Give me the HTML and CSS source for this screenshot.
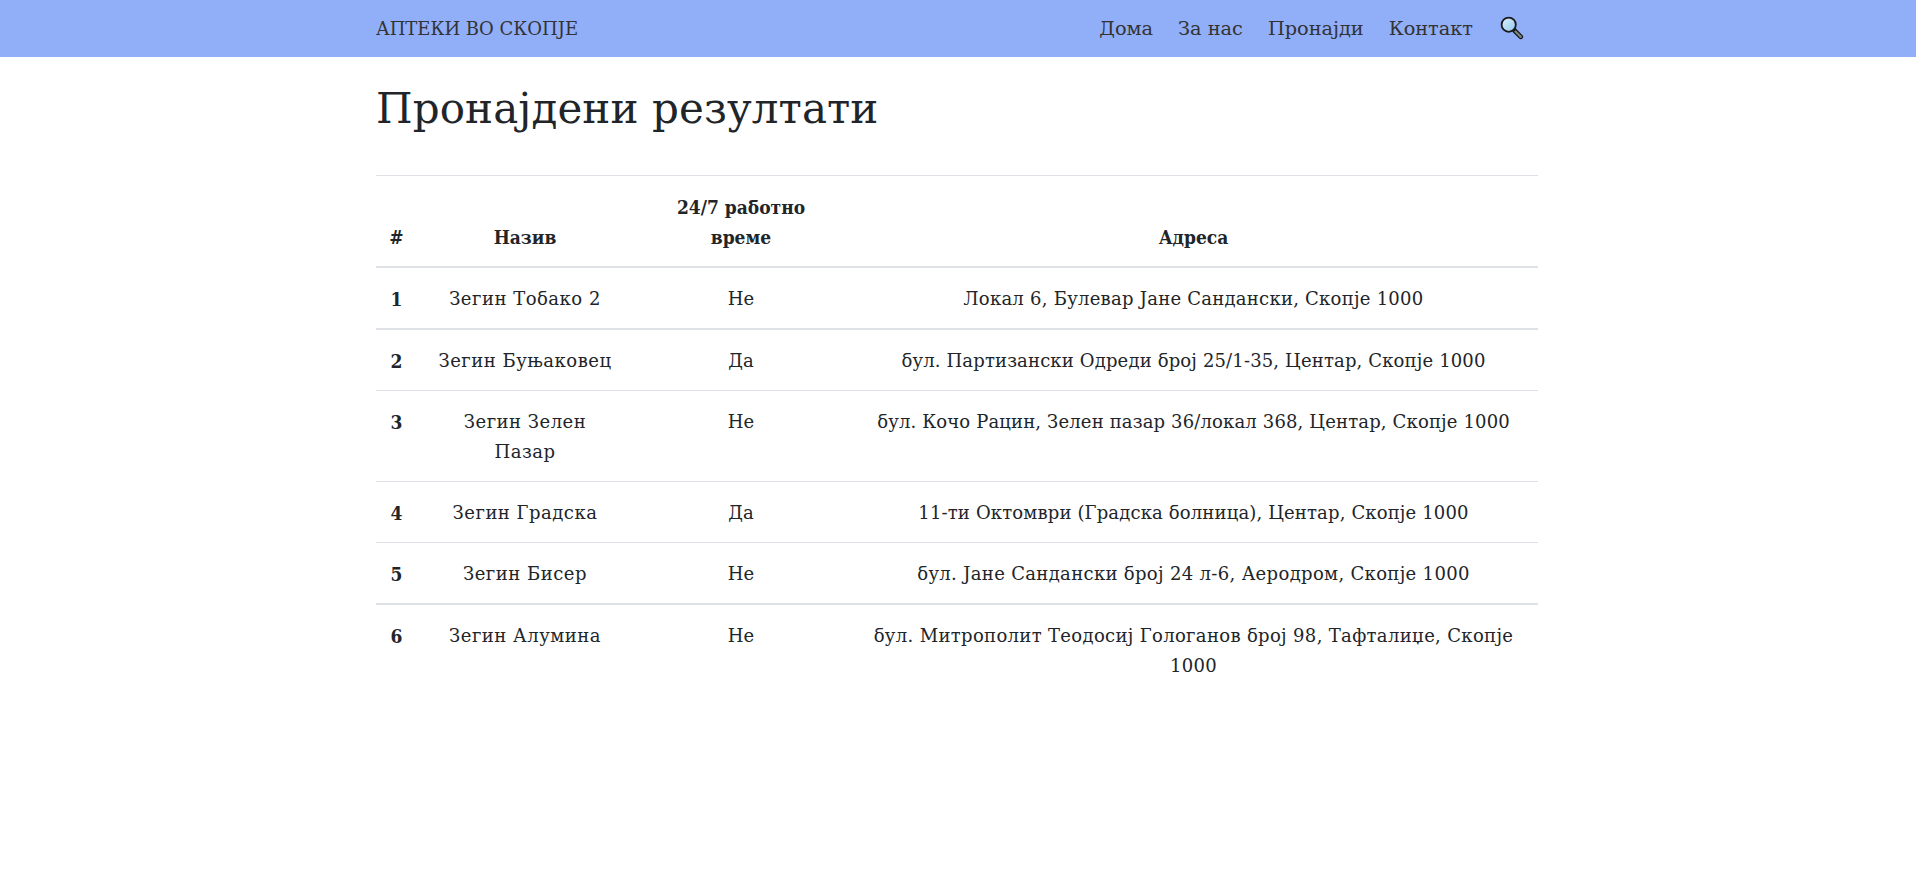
FILE: index.html
```html
<!DOCTYPE html>
<html lang="mk">
<head>
<meta charset="utf-8">
<title>Аптеки во Скопје</title>
<link rel="stylesheet" href="styles.css">
</head>
<body>
<header class="navbar">
  <div class="nav-inner">
    <a class="brand">АПТЕКИ ВО СКОПЈЕ</a>
    <nav class="nav-links">
      <a>Дома</a><a>За нас</a><a>Пронајди</a><a>Контакт</a>
      <svg class="search" width="26" height="26" viewBox="0 0 26 26">
        <defs>
          <linearGradient id="lens" x1="0" y1="0" x2="1" y2="1">
            <stop offset="0" stop-color="#dff1fc"/>
            <stop offset="1" stop-color="#8fc6ee"/>
          </linearGradient>
        </defs>
        <path d="M16.5 16.5 L22.8 22.8" stroke="#111" stroke-width="4.6" stroke-linecap="round"/>
        <path d="M17.5 17.5 L22.8 22.8" stroke="#79837e" stroke-width="2.4" stroke-linecap="round"/>
        <circle cx="10.7" cy="10.7" r="7.1" fill="url(#lens)" stroke="#1a1a1a" stroke-width="1.8"/>
      </svg>
    </nav>
  </div>
</header>
<main class="content">
  <h1 class="title">Пронајдени резултати</h1>
  <table class="results">
    <thead>
      <tr><th class="c-n">#</th><th class="c-name">Назив</th><th class="c-h">24/7 работно време</th><th>Адреса</th></tr>
    </thead>
    <tbody>
      <tr class="r-first"><th>1</th><td class="name">Зегин Тобако 2</td><td>Не</td><td class="addr-mid">Локал 6, Булевар Јане Сандански, Скопје 1000</td></tr>
      <tr class="r-thick"><th>2</th><td class="name">Зегин Буњаковец</td><td>Да</td><td>бул. Партизански Одреди број 25/1-35, Центар, Скопје 1000</td></tr>
      <tr><th>3</th><td class="name">Зегин Зелен Пазар</td><td>Не</td><td>бул. Кочо Рацин, Зелен пазар 36/локал 368, Центар, Скопје 1000</td></tr>
      <tr><th>4</th><td class="name">Зегин Градска</td><td>Да</td><td>11-ти Октомври (Градска болница), Центар, Скопје 1000</td></tr>
      <tr><th>5</th><td class="name">Зегин Бисер</td><td>Не</td><td class="addr-wide">бул. Јане Сандански број 24 л-6, Аеродром, Скопје 1000</td></tr>
      <tr class="r-thick"><th>6</th><td class="name">Зегин Алумина</td><td>Не</td><td class="addr-wide">бул. Митрополит Теодосиј Гологанов број 98, Тафталиџе, Скопје 1000</td></tr>
    </tbody>
  </table>
</main>
</body>
</html>
```
FILE: styles.css
```css
* { box-sizing: border-box; }
body { margin: 0; background: #fff; color: #212529; font-family: "DejaVu Serif", "Liberation Serif", serif; font-size: 18px; line-height: 30px; }
.navbar { height: 57px; background: #91aef8; }
.nav-inner { width: 1164px; margin: 0 auto; display: flex; align-items: center; justify-content: space-between; height: 57px; }
.brand { font-size: 18px; color: #333; }
.nav-links { display: flex; align-items: center; gap: 25px; padding-right: 16px; color: #333; font-size: 19.3px; }
.search { display: block; margin-bottom: 3px; }
.content { width: 1164px; margin: 0 auto; }
.title { font-size: 42px; letter-spacing: 0.1px; font-weight: 400; line-height: 52px; margin: 26px 0 40px; }
.results { width: 1162px; border-collapse: separate; border-spacing: 0; table-layout: fixed; text-align: center; }
.results th, .results td { padding: 16px 15px 14px; border-top: 1px solid #dee2e6; vertical-align: top; }
.results th { font-family: "DejaVu Serif Condensed", "DejaVu Serif", serif; font-size: 19px; }
.results td { letter-spacing: 0.15px; }
.results td.name { letter-spacing: 0.5px; }
.results td.addr-mid { letter-spacing: 0.25px; }
.results td.addr-wide { letter-spacing: 0.33px; }
.results thead th { vertical-align: bottom; border-bottom: 2px solid #dee2e6; }
.results tbody th { padding-left: 0; padding-right: 0; }
.results thead th.c-n { padding-left: 0; padding-right: 0; }
.results .r-first > * { border-top: 0; }
.results .r-thick > * { border-top-width: 2px; }
.c-n { width: 41px; }
.c-name { width: 216px; }
.c-h { width: 216px; }
```
